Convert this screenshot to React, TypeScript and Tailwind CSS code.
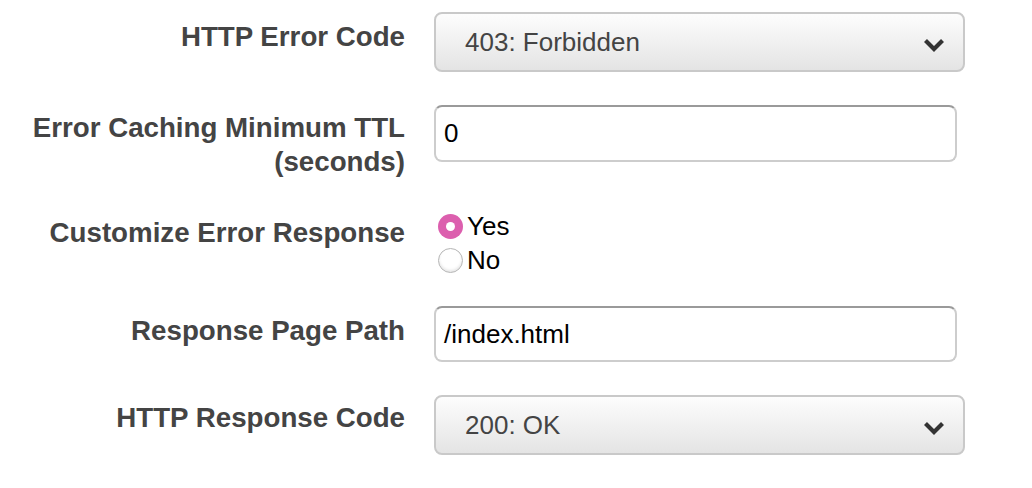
import { useState } from 'react'

const labelCls = "w-[405px] shrink-0 text-right text-[27.7px] font-bold leading-[34px] text-[#444]"

function Select({ value }: { value: string }) {
  return (
    <div className="ml-[29px] flex h-[60px] w-[531px] items-center justify-between rounded-[8px] border-2 border-[#c9c9c9] bg-gradient-to-b from-[#fdfdfd] to-[#e4e4e4] pl-[29px] pr-[18px] text-[26px] text-[#444]">
      <span>{value}</span>
      <svg width="22" height="16" viewBox="0 0 22 16" className="mt-[6px]">
        <path d="M2.5 3.5 L11 12 L19.5 3.5" fill="none" stroke="#333" strokeWidth="4.2" strokeLinejoin="miter" />
      </svg>
    </div>
  )
}

function TextInput({ value, h }: { value: string; h: string }) {
  return (
    <div className={`ml-[29px] flex w-[523px] items-center rounded-[8px] border-2 border-[#cdcdcd] border-t-[#9a9a9a] bg-white pl-[8px] text-[26px] text-black ${h}`}>
      {value}
    </div>
  )
}

function Radio({ checked, label, onClick }: { checked: boolean; label: string; onClick: () => void }) {
  return (
    <button type="button" onClick={onClick} className="flex h-[34px] items-center text-[26px] text-black">
      {checked ? (
        <span className="ml-[4px] flex h-[25px] w-[25px] items-center justify-center rounded-full bg-[#dc5fae]">
          <span className="h-[9px] w-[9px] rounded-full bg-white" />
        </span>
      ) : (
        <span className="ml-[4px] h-[25px] w-[25px] rounded-full border border-[#b5b5b5] bg-white shadow-[inset_0_-2px_3px_rgba(0,0,0,0.1)]" />
      )}
      <span className="ml-[4px]">{label}</span>
    </button>
  )
}

export default function App() {
  const [custom, setCustom] = useState(true)

  return (
    <div className="min-h-screen bg-white pt-[12px] font-['Liberation_Sans',Arial,sans-serif]">
      <div className="flex items-start">
        <div className={`${labelCls} pt-[8px]`}>HTTP Error Code</div>
        <Select value="403: Forbidden" />
      </div>

      <div className="mt-[33px] flex items-start">
        <div className={`${labelCls} pt-[6px]`}>
          Error Caching Minimum TTL
          <br />
          (seconds)
        </div>
        <TextInput value="0" h="h-[57px]" />
      </div>

      <div className="mt-[30px] flex items-start">
        <div className={`${labelCls} pt-[7px]`}>Customize Error Response</div>
        <div className="ml-[29px] flex flex-col">
          <Radio checked={custom} label="Yes" onClick={() => setCustom(true)} />
          <Radio checked={!custom} label="No" onClick={() => setCustom(false)} />
        </div>
      </div>

      <div className="mt-[29px] flex items-start">
        <div className={`${labelCls} pt-[8px]`}>Response Page Path</div>
        <TextInput value="/index.html" h="h-[56px]" />
      </div>

      <div className="mt-[33px] flex items-start">
        <div className={`${labelCls} pt-[6px]`}>HTTP Response Code</div>
        <Select value="200: OK" />
      </div>
    </div>
  )
}
